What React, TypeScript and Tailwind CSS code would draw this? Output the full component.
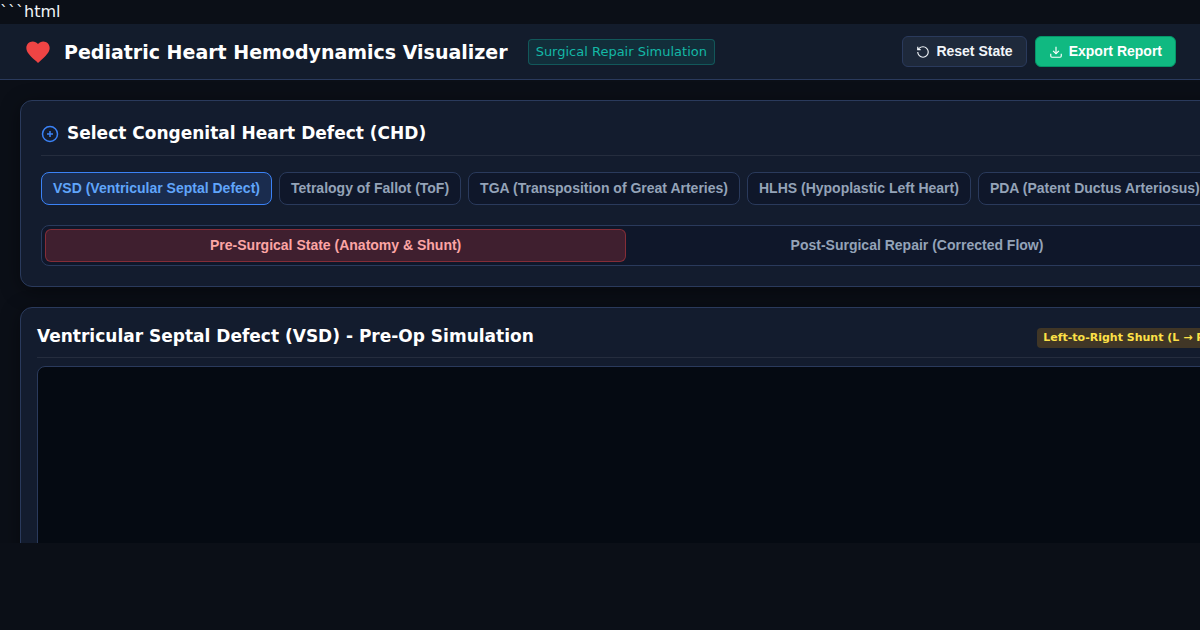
import { useState } from "react";

const DEFECTS = [
  { id: "vsd", label: "VSD (Ventricular Septal Defect)" },
  { id: "tof", label: "Tetralogy of Fallot (ToF)" },
  { id: "tga", label: "TGA (Transposition of Great Arteries)" },
  { id: "hlhs", label: "HLHS (Hypoplastic Left Heart)" },
  { id: "pda", label: "PDA (Patent Ductus Arteriosus)" },
];

function HeartIcon() {
  return (
    <svg viewBox="0 0 24 24" className="w-7 h-7 shrink-0" fill="#ef4444" aria-hidden="true">
      <path d="M12 21.35l-1.45-1.32C5.4 15.36 2 12.28 2 8.5 2 5.42 4.42 3 7.5 3c1.74 0 3.41.81 4.5 2.09C13.09 3.81 14.76 3 16.5 3 19.58 3 22 5.42 22 8.5c0 3.78-3.4 6.86-8.55 11.54L12 21.35z" />
    </svg>
  );
}

function ResetIcon() {
  return (
    <svg viewBox="0 0 24 24" className="w-3.5 h-3.5" fill="none" stroke="currentColor" strokeWidth="2" aria-hidden="true">
      <path d="M3 12a9 9 0 1 0 9-9 9.75 9.75 0 0 0-6.74 2.74L3 8" />
      <path d="M3 3v5h5" />
    </svg>
  );
}

function ExportIcon() {
  return (
    <svg viewBox="0 0 24 24" className="w-3.5 h-3.5" fill="none" stroke="currentColor" strokeWidth="2" aria-hidden="true">
      <path d="M21 15v4a2 2 0 0 1-2 2H5a2 2 0 0 1-2-2v-4" />
      <path d="M7 10l5 5 5-5" />
      <path d="M12 15V3" />
    </svg>
  );
}

function Header({ onReset }: { onReset: () => void }) {
  return (
    <header className="flex shrink-0 items-center justify-between h-14 px-6 bg-[#131c2c] border-b border-[#2a3a5c]">
      <div className="flex items-center gap-3">
        <HeartIcon />
        <h1 className="mr-2 text-[19px] leading-6 font-bold text-white whitespace-nowrap">
          Pediatric Heart Hemodynamics Visualizer
        </h1>
        <span className="px-[7px] py-1 rounded-sm border border-[#14b8a6]/30 bg-[#14b8a6]/12 text-[13px] leading-4 text-[#14b8a6] whitespace-nowrap">
          Surgical Repair Simulation
        </span>
      </div>
      <div className="flex items-center gap-2 font-['Liberation_Sans',sans-serif] text-sm leading-[15px] font-semibold">
        <button
          type="button"
          onClick={onReset}
          className="flex items-center gap-1.5 px-[13px] py-[7px] rounded-md border border-[#2a3a5c] bg-[#1e293b] text-slate-100"
        >
          <ResetIcon />
          Reset State
        </button>
        <button
          type="button"
          className="flex items-center gap-1.5 px-[13px] py-[7px] rounded-md border border-[#059669] bg-[#10b981] text-white"
        >
          <ExportIcon />
          Export Report
        </button>
      </div>
    </header>
  );
}

export default function App() {
  const [defect, setDefect] = useState("vsd");
  const [postOp, setPostOp] = useState(false);

  const reset = () => {
    setDefect("vsd");
    setPostOp(false);
  };

  return (
    <div className="flex flex-col h-screen overflow-hidden pb-[87px] bg-[#0b0f17] text-slate-100 font-['DejaVu_Sans',sans-serif]">
      <div className="shrink-0 text-base leading-6">```html</div>
      <Header onReset={reset} />

      <main className="flex-1 min-h-0 overflow-hidden p-5">
        <div className="flex flex-col gap-5 w-max min-w-full">
          {/* Defect selector */}
          <section className="p-5 rounded-xl border border-[#2a3a5c] bg-[#131c2e] shadow-[0_4px_20px_rgba(0,0,0,0.4)]">
            <h2 className="flex items-center gap-2 pb-2.5 mb-4 border-b border-white/8 text-[17px] leading-6 font-semibold text-white">
              <svg viewBox="0 0 24 24" className="w-[18px] h-[18px] mt-0.5" fill="none" stroke="#3b82f6" strokeWidth="2" aria-hidden="true">
                <circle cx="12" cy="12" r="10" />
                <path d="M12 8v8M8 12h8" />
              </svg>
              Select Congenital Heart Defect (CHD)
            </h2>

            <div className="flex gap-[7px] mb-5 font-['Liberation_Sans',sans-serif] text-sm leading-[15px] font-semibold">
              {DEFECTS.map((d) => (
                <button
                  key={d.id}
                  type="button"
                  onClick={() => setDefect(d.id)}
                  className={
                    d.id === defect
                      ? "px-[11px] py-2 rounded-lg border border-[#3b82f6] bg-[#1a2c4e] text-[#60a5fa] whitespace-nowrap"
                      : "px-[11px] py-2 rounded-lg border border-[#2a3a5c] bg-[#0f172a] text-[#94a3b8] whitespace-nowrap"
                  }
                >
                  {d.label}
                </button>
              ))}
            </div>

            <div className="grid grid-cols-2 p-[3px] rounded-lg border border-[#2a3a5c] bg-[#0f172a] font-['Liberation_Sans',sans-serif] text-sm leading-[15px] font-semibold">
              <button
                type="button"
                onClick={() => setPostOp(false)}
                className={
                  postOp
                    ? "py-2 rounded-md border border-transparent text-[#94a3b8]"
                    : "py-2 rounded-md border border-[#ef4444]/40 bg-[#3f1f2f] text-[#fca5a5]"
                }
              >
                Pre-Surgical State (Anatomy &amp; Shunt)
              </button>
              <button
                type="button"
                onClick={() => setPostOp(true)}
                className={
                  postOp
                    ? "py-2 rounded-md border border-[#10b981]/50 bg-[#143a3a] text-[#6ee7b7]"
                    : "py-2 rounded-md border border-transparent text-[#94a3b8]"
                }
              >
                Post-Surgical Repair (Corrected Flow)
              </button>
            </div>
          </section>

          {/* Simulation panel */}
          <section className="p-4 rounded-xl border border-[#2a3a5c] bg-[#131c2e] shadow-[0_4px_20px_rgba(0,0,0,0.4)]">
            <div className="flex items-center justify-between pb-[9px] mb-2 border-b border-white/8">
              <h2 className="text-[17px] leading-6 font-semibold text-white">
                Ventricular Septal Defect (VSD) - Pre-Op Simulation
              </h2>
              <span className="mt-1 px-1.5 py-0.5 rounded-sm bg-[#f59e0b]/20 text-[11px] leading-4 font-bold text-[#fde047]">
                Left-to-Right Shunt (L → R)
              </span>
            </div>
            <canvas className="block w-full h-[420px] rounded-lg border border-[#2a3a5c] bg-[#050a12]" />
          </section>
        </div>
      </main>
    </div>
  );
}
